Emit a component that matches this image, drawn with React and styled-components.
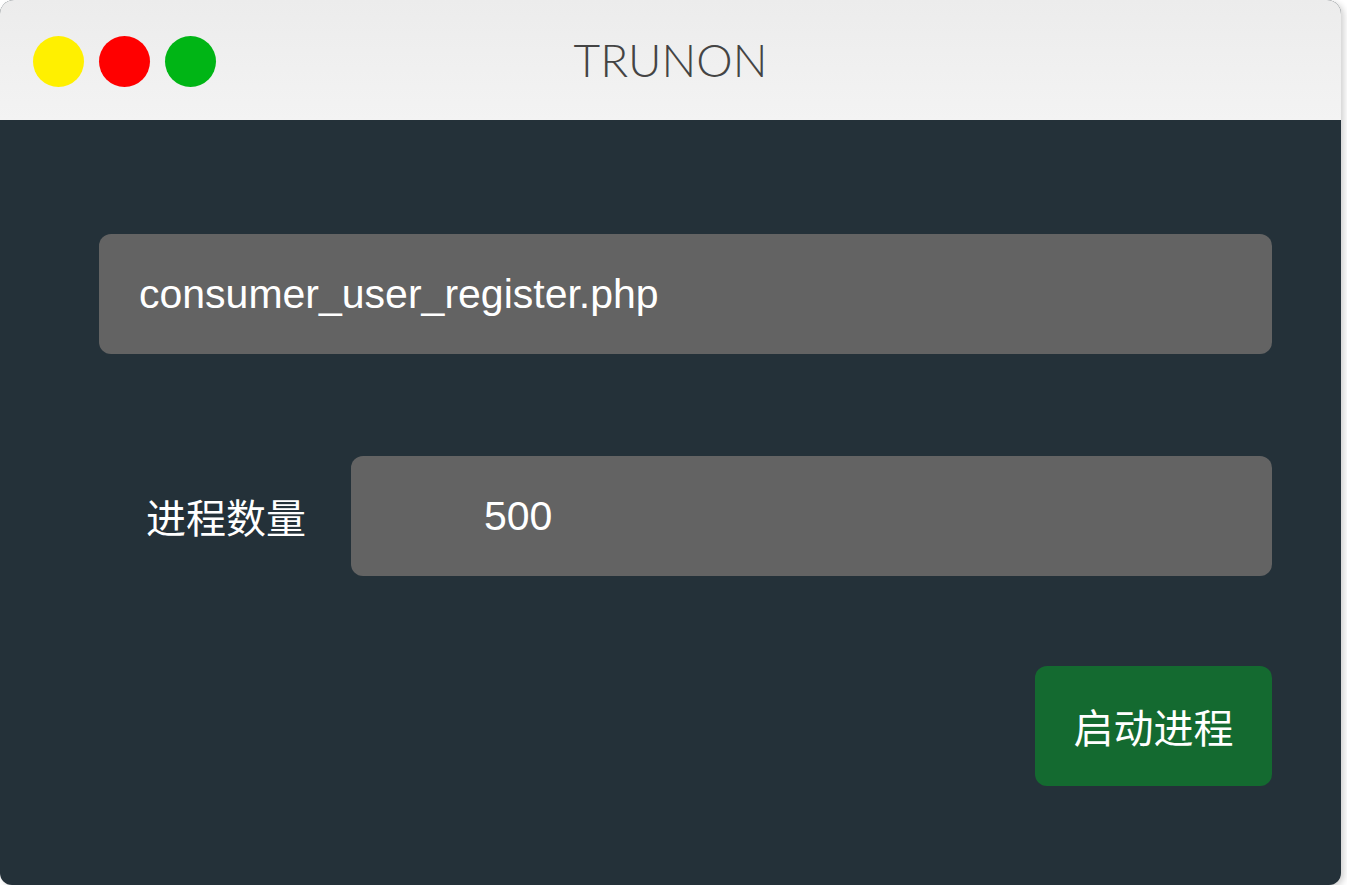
import styled, { createGlobalStyle } from "styled-components";

const GlobalStyle = createGlobalStyle`
  html, body {
    margin: 0;
    padding: 0;
    background: #ffffff;
  }
  body {
    font-family: "Liberation Sans", "Noto Sans CJK SC", sans-serif;
  }
`;

const Window = styled.div`
  width: 1341px;
  height: 885px;
  display: flex;
  flex-direction: column;
  border-radius: 14px 14px 12px 12px;
  overflow: hidden;
  background: #243139;
  box-shadow: 3px 2px 6px rgba(0, 0, 0, 0.18);
`;

const TitleBar = styled.div`
  position: relative;
  height: 120px;
  flex-shrink: 0;
  display: flex;
  align-items: center;
  justify-content: center;
  background: linear-gradient(#ececec, #f3f3f3);
`;

const Lights = styled.div`
  position: absolute;
  left: 33px;
  top: 36px;
  display: flex;
  gap: 15px;
`;

const Light = styled.span`
  width: 51px;
  height: 51px;
  border-radius: 50%;
  background: ${(p) => p.$color};
`;

const Title = styled.h1`
  margin: 0 0 2px 0;
  font-family: "Lato", "Liberation Sans", sans-serif;
  font-weight: 300;
  font-size: 46px;
  color: #444444;
`;

const Body = styled.div`
  flex: 1;
  display: flex;
  flex-direction: column;
  padding: 114px 69px 0 99px;
`;

const Field = styled.div`
  height: 120px;
  display: flex;
  align-items: center;
  padding-left: ${(p) => p.$indent || 40}px;
  background: #636363;
  border-radius: 12px;
  color: #ffffff;
  font-size: 41px;
  flex: ${(p) => (p.$grow ? 1 : "none")};
`;

const Row = styled.div`
  display: flex;
  align-items: center;
  margin-top: 102px;
`;

const Label = styled.div`
  width: 252px;
  flex-shrink: 0;
  padding-left: 47px;
  box-sizing: border-box;
  font-family: "Noto Sans CJK SC", sans-serif;
  font-size: 40px;
  color: #ffffff;
`;

const Actions = styled.div`
  display: flex;
  justify-content: flex-end;
  margin-top: 90px;
`;

const StartButton = styled.button`
  width: 237px;
  height: 120px;
  border: none;
  border-radius: 12px;
  background: #146a30;
  color: #ffffff;
  font-family: "Noto Sans CJK SC", sans-serif;
  font-size: 40px;
  cursor: pointer;
`;

export default function App() {
  return (
    <>
      <GlobalStyle />
      <Window>
        <TitleBar>
          <Lights>
            <Light $color="#fff000" />
            <Light $color="#ff0000" />
            <Light $color="#00b515" />
          </Lights>
          <Title>TRUNON</Title>
        </TitleBar>
        <Body>
          <Field>consumer_user_register.php</Field>
          <Row>
            <Label>进程数量</Label>
            <Field $grow $indent={133}>500</Field>
          </Row>
          <Actions>
            <StartButton>启动进程</StartButton>
          </Actions>
        </Body>
      </Window>
    </>
  );
}
